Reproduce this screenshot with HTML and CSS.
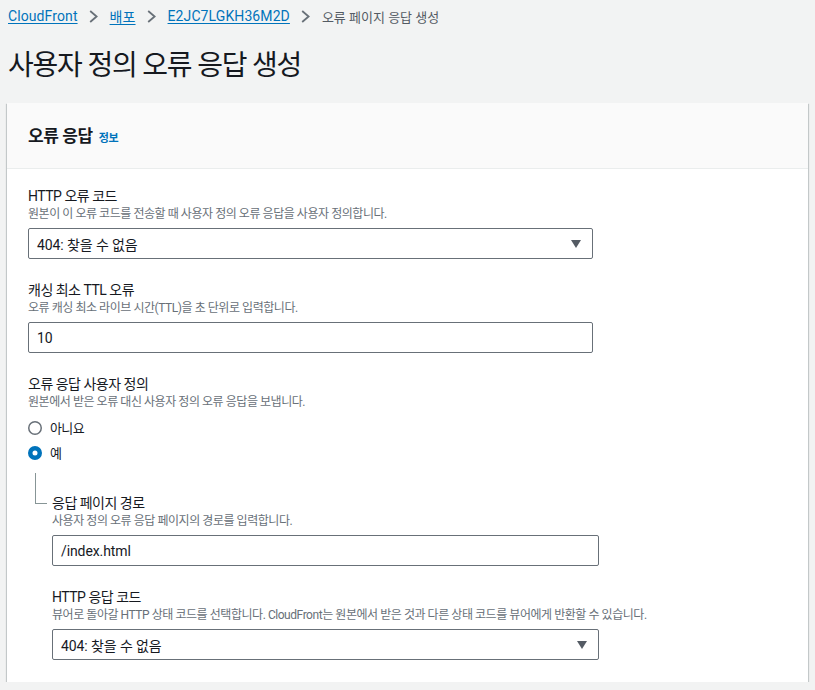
FILE: index.html
```html
<!DOCTYPE html>
<html lang="ko">
<head>
<meta charset="utf-8">
<title>사용자 정의 오류 응답 생성</title>
<link rel="stylesheet" href="styles.css">
</head>
<body>
<div class="page">
  <nav class="breadcrumb">
    <a class="crumb-link" href="#">CloudFront</a>
    <svg class="chev" width="9" height="13" viewBox="0 0 9 13"><polyline points="1.2,1 7.6,6.5 1.2,12" fill="none" stroke="#687078" stroke-width="1.8"/></svg>
    <a class="crumb-link" href="#">배포</a>
    <svg class="chev" width="9" height="13" viewBox="0 0 9 13"><polyline points="1.2,1 7.6,6.5 1.2,12" fill="none" stroke="#687078" stroke-width="1.8"/></svg>
    <a class="crumb-link" href="#">E2JC7LGKH36M2D</a>
    <svg class="chev" width="9" height="13" viewBox="0 0 9 13"><polyline points="1.2,1 7.6,6.5 1.2,12" fill="none" stroke="#687078" stroke-width="1.8"/></svg>
    <span class="crumb-current">오류 페이지 응답 생성</span>
  </nav>

  <h1 class="title">사용자 정의 오류 응답 생성</h1>

  <section class="card">
    <header class="card-header">
      <h2 class="card-title">오류 응답</h2>
      <a class="info-link" href="#">정보</a>
    </header>
    <div class="card-body">
      <div class="field">
        <div class="label">HTTP 오류 코드</div>
        <div class="desc">원본이 이 오류 코드를 전송할 때 사용자 정의 오류 응답을 사용자 정의합니다.</div>
        <div class="control select wide">
          <span class="value">404: 찾을 수 없음</span>
          <svg class="caret" width="10" height="8" viewBox="0 0 10 8"><polygon points="0,0 10,0 5,8" fill="#545b64"/></svg>
        </div>
      </div>

      <div class="field">
        <div class="label">캐싱 최소 TTL 오류</div>
        <div class="desc">오류 캐싱 최소 라이브 시간(TTL)을 초 단위로 입력합니다.</div>
        <div class="control wide"><span class="value">10</span></div>
      </div>

      <div class="field">
        <div class="label">오류 응답 사용자 정의</div>
        <div class="desc">원본에서 받은 오류 대신 사용자 정의 오류 응답을 보냅니다.</div>
        <div class="radios">
          <div class="radio-row">
            <svg class="radio" width="14" height="14" viewBox="0 0 14 14"><circle cx="7" cy="7" r="6.25" fill="#fff" stroke="#687078" stroke-width="1.5"/></svg>
            <span class="radio-label">아니요</span>
          </div>
          <div class="radio-row">
            <svg class="radio" width="14" height="14" viewBox="0 0 14 14"><circle cx="7" cy="7" r="4.75" fill="#fff" stroke="#0073bb" stroke-width="4.5"/></svg>
            <span class="radio-label">예</span>
          </div>
        </div>
      </div>

      <div class="nested">
        <div class="connector"></div>
        <div class="nested-body">
          <div class="field">
            <div class="label">응답 페이지 경로</div>
            <div class="desc">사용자 정의 오류 응답 페이지의 경로를 입력합니다.</div>
            <div class="control narrow"><span class="value">/index.html</span></div>
          </div>
          <div class="field">
            <div class="label">HTTP 응답 코드</div>
            <div class="desc">뷰어로 돌아갈 HTTP 상태 코드를 선택합니다. CloudFront는 원본에서 받은 것과 다른 상태 코드를 뷰어에게 반환할 수 있습니다.</div>
            <div class="control select narrow">
              <span class="value">404: 찾을 수 없음</span>
              <svg class="caret" width="10" height="8" viewBox="0 0 10 8"><polygon points="0,0 10,0 5,8" fill="#545b64"/></svg>
            </div>
          </div>
        </div>
      </div>
    </div>
  </section>
</div>
</body>
</html>
```

FILE: styles.css
```css
* { box-sizing: border-box; }

html, body {
  margin: 0;
  padding: 0;
  background: #f2f3f3;
}

body {
  font-family: Roboto, "Noto Sans CJK KR", sans-serif;
  color: #16191f;
}

.page {
  padding: 0 7px;
}

.breadcrumb {
  height: 32px;
  display: flex;
  align-items: center;
  padding-left: 1px;
  font-size: 14px;
  letter-spacing: 0.1px;
}

.crumb-link {
  color: #0073bb;
  text-decoration: underline;
  text-underline-offset: 2px;
}

.chev {
  margin: 0 12px 0 11px;
  flex: none;
}

.crumb-current {
  color: #545b64;
  font-size: 13px;
  letter-spacing: 0;
}

.title {
  margin: 16px 0 0 1px;
  font-size: 28px;
  line-height: 36px;
  font-weight: 400;
  letter-spacing: -1.2px;
  color: #16191f;
}

.card {
  margin-top: 19px;
  background: #fff;
  box-shadow: 0 1px 1px 0 rgba(0, 28, 36, 0.3),
              1px 1px 1px 0 rgba(0, 28, 36, 0.15),
              -1px 1px 1px 0 rgba(0, 28, 36, 0.15);
}

.card-header {
  height: 66px;
  display: flex;
  align-items: center;
  padding: 0 21px;
  background: #fafafa;
  border-bottom: 1px solid #eaeded;
}

.card-title {
  margin: 0;
  font-size: 17px;
  font-weight: 700;
  letter-spacing: -0.4px;
  line-height: 22px;
}

.info-link {
  margin-left: 6px;
  margin-top: 2px;
  color: #0073bb;
  font-size: 11px;
  font-weight: 700;
  letter-spacing: -0.4px;
  text-decoration: none;
}

.card-body {
  padding: 17px 21px 22px 21px;
}

.field + .field {
  margin-top: 21px;
}

.nested {
  display: flex;
}

.label {
  font-size: 14px;
  line-height: 20px;
  letter-spacing: -0.5px;
  color: #16191f;
}

.desc {
  font-size: 12px;
  line-height: 16px;
  letter-spacing: -0.45px;
  color: #687078;
  white-space: nowrap;
}

.control {
  margin-top: 6px;
  height: 31px;
  border: 1px solid #687078;
  border-radius: 2px;
  background: #fff;
  display: flex;
  align-items: center;
  padding: 0 11px 0 8px;
}

.control.wide { width: 565px; }
.control.narrow { width: 547px; }

.value {
  flex: 1;
  font-size: 14px;
  letter-spacing: -0.1px;
  color: #16191f;
}

.caret {
  flex: none;
  margin-top: 1px;
}

.radios {
  margin-top: 5px;
  display: flex;
  flex-direction: column;
}

.radio-row {
  height: 25px;
  display: flex;
  align-items: center;
}

.radio {
  flex: none;
  margin-right: 8px;
}

.radio-label {
  font-size: 13px;
  letter-spacing: -0.6px;
}

.connector {
  flex: none;
  margin: 8px 5px 0 7px;
  width: 12px;
  height: 31px;
  border-left: 1px solid #879596;
  border-bottom: 1px solid #879596;
}

.nested-body {
  padding-top: 28px;
}
```
